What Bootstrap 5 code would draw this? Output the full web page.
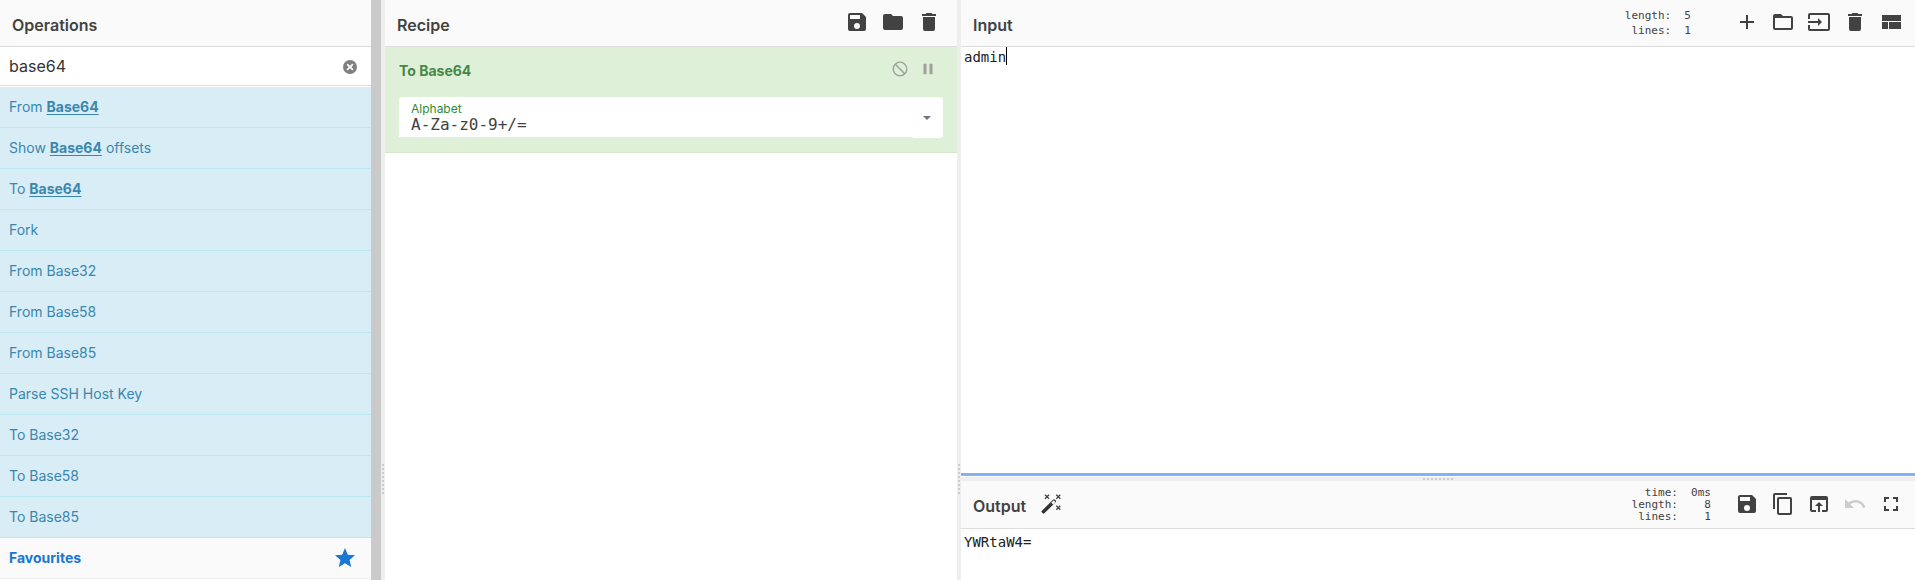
<!DOCTYPE html>
<html lang="en">
<head>
<meta charset="utf-8">
<meta name="viewport" content="width=device-width, initial-scale=1">
<title>CyberChef</title>
<link href="https://cdn.jsdelivr.net/npm/bootstrap@5.3.0/dist/css/bootstrap.min.css" rel="stylesheet">
<style>
body { font-family: Inter, "Noto Sans", sans-serif; font-size: 14px; line-height: 20px; color: #424242; }
.workspace { display: grid; height: 100vh; grid-template-columns: 381fr 4px 572fr 4px 954fr; }
.io-panes { display: grid; grid-template-rows: 477fr 4px 99fr; }
.pane-title { min-height: 47px; padding: 0 12px; background: #fafafa; border-bottom: 1px solid #ddd; }
.pane-title h2 { font-size: 16px; line-height: 24px; font-weight: 600; margin: 0; padding-top: 3px; }
.output-title { min-height: 48px; }
.recipe-title { padding-right: 16px; }
.tools { gap: 12px; padding-bottom: 2px; }
.gutter { background: #eee; }
.gutter-col { padding: 0 1px; }
.gutter-col::before { content: ""; flex: 464 1 0; }
.gutter-col::after { content: ""; flex: 86 1 0; }
.grip-v { height: 30px; background: repeating-linear-gradient(#ccc 0 2px, transparent 2px 4px); }
.grip-h { width: 30px; height: 2px; background: repeating-linear-gradient(90deg, #ccc 0 2px, transparent 2px 4px); }
.track { width: 10px; background: #cacaca; }
.icon-btn { border: 0; background: none; padding: 0; color: #424242; display: block; line-height: 0; }
.icon-btn:disabled { color: #ccc; }
svg { fill: currentColor; display: block; }
.search-row { height: 39px; margin-bottom: 1px; padding-right: 12px; border-bottom: 1px solid #ddd; }
.search-row input { border: 0; outline: 0; background: none; padding: 0 9px; font-size: 16px; color: #333; min-width: 0; }
.clear-btn { color: #808080; padding-top: 2px; }
.op-list a { display: block; height: 41px; padding: 10px 9px; color: #3a87ad; background: #d9edf7; border-bottom: 1px solid #bce8f1; text-decoration: none; }
.op-list b { font-weight: 700; text-decoration: underline; text-underline-offset: 2px; }
.category { height: 41px; padding: 0 14px 0 9px; background: #fafafa; border-bottom: 1px solid #eee; color: #1976d2; font-weight: 700; text-decoration: none; }
.recipe-op { background: #dff0d8; border-bottom: 1px solid #d6e9c6; padding: 10px 14px 15px; color: #468847; }
.recipe-op h3 { font-size: 14px; line-height: 20px; font-weight: 700; margin: 0; padding-top: 4px; }
.op-tools { gap: 10px; padding-right: 6px; }
.op-tools .icon-btn { color: #9da19a; }
.arg { margin-top: 16px; background: #fff; border-radius: 4px 4px 0 0; height: 40px; }
.arg-field { padding: 5px 12px 0; }
.arg label { font-size: 12px; line-height: 14px; color: #2e8b37; }
.arg input { border: 0; outline: 0; padding: 0; background: none; line-height: 16px; height: 16px; font-size: 16px; color: #424242; }
.arg .dropdown-toggle { width: 32px; height: 41px; border-radius: 4px; background: #fff; color: #6b7785; }
.arg .dropdown-toggle::after { margin: 0; border-width: 4px 4px 0; }
.mono, .arg input { font-family: "DejaVu Sans Mono", "Liberation Mono", monospace; }
.stats { font-size: 11px; line-height: 15px; text-align: right; margin: 0 44px 0 0; overflow: visible; color: #424242; }
.stats-tight { line-height: 12px; margin-right: 24px; }
.wand-btn { margin-left: 15px; }
.editor { display: block; border: 0; outline: 0; resize: none; padding: 0 3px; font-size: 14px; line-height: 20px; color: #212121; width: 100%; background: #fff; }
.output-editor { padding-top: 3px; }
.input-pane { border-bottom: 3px solid #80b1f9; margin-bottom: 1px; }
.caret { position: absolute; top: 0; left: calc(3px + 5ch); width: 1px; height: 18px; background: #000; }
.editor-wrap { font-size: 14px; }
</style>
</head>
<body class="overflow-hidden">
<svg class="d-none" aria-hidden="true">
<symbol id="save" viewBox="0 0 24 24"><path d="M17 3H5a2 2 0 0 0-2 2v14a2 2 0 0 0 2 2h14a2 2 0 0 0 2-2V7l-4-4zm-5 16a3 3 0 1 1 0-6 3 3 0 0 1 0 6zm3-10H5V5h10v4z"/></symbol>
<symbol id="folder" viewBox="0 0 24 24"><path d="M10 4H4a2 2 0 0 0-2 2v12a2 2 0 0 0 2 2h16a2 2 0 0 0 2-2V8a2 2 0 0 0-2-2h-8l-2-2z"/></symbol>
<symbol id="folder-open" viewBox="0 0 24 24"><path d="M20 6h-8l-2-2H4a2 2 0 0 0-2 2v12a2 2 0 0 0 2 2h16a2 2 0 0 0 2-2V8a2 2 0 0 0-2-2zm0 12H4V8h16v10z"/></symbol>
<symbol id="trash" viewBox="0 0 24 24"><path d="M6 19a2 2 0 0 0 2 2h8a2 2 0 0 0 2-2V7H6v12zM19 4h-3.5l-1-1h-5l-1 1H5v2h14V4z"/></symbol>
<symbol id="add" viewBox="0 0 24 24"><path d="M19 13h-6v6h-2v-6H5v-2h6V5h2v6h6v2z"/></symbol>
<symbol id="import" viewBox="0 0 24 24"><path d="M21 3H3a2 2 0 0 0-2 2v4h2V5h18v14H3v-4H1v4a2 2 0 0 0 2 2h18a2 2 0 0 0 2-2V5a2 2 0 0 0-2-2zM11 16l4-4-4-4v3H1v2h10v3z"/></symbol>
<symbol id="layout" viewBox="0 0 24 24"><path d="M3 5h19v6H3zM3 12h6v7H3zM10 12h12v7H10z"/></symbol>
<symbol id="copy" viewBox="0 0 24 24"><path d="M16 1H4a2 2 0 0 0-2 2v14h2V3h12V1zm3 4H8a2 2 0 0 0-2 2v14a2 2 0 0 0 2 2h11a2 2 0 0 0 2-2V7a2 2 0 0 0-2-2zm0 16H8V7h11v14z"/></symbol>
<symbol id="open" viewBox="0 0 24 24"><path d="M19 4H5a2 2 0 0 0-2 2v12a2 2 0 0 0 2 2h4v-2H5V8h14v10h-4v2h4a2 2 0 0 0 2-2V6a2 2 0 0 0-2-2zm-7 6l-4 4h3v6h2v-6h3l-4-4z"/></symbol>
<symbol id="undo" viewBox="0 0 24 24"><path d="M12.5 8c-2.65 0-5.05.99-6.9 2.6L2 7v9h9l-3.62-3.62c1.39-1.16 3.16-1.88 5.12-1.88 3.54 0 6.55 2.31 7.6 5.5l2.37-.78C21.08 11.03 17.15 8 12.5 8z"/></symbol>
<symbol id="full" viewBox="0 0 24 24"><path d="M7 14H5v5h5v-2H7v-3zm-2-4h2V7h3V5H5v5zm12 7h-3v2h5v-5h-2v3zM14 5v2h3v3h2V5h-5z"/></symbol>
<symbol id="ban" viewBox="0 0 24 24"><path d="M12 2a10 10 0 1 0 0 20 10 10 0 0 0 0-20zM4 12a8 8 0 0 1 1.69-4.9L16.9 18.31A8 8 0 0 1 4 12zm14.31 4.9L7.1 5.69A8 8 0 0 1 18.31 16.9z"/></symbol>
<symbol id="pause" viewBox="0 0 24 24"><path d="M6 19h4V5H6v14zm8-14v14h4V5h-4z"/></symbol>
<symbol id="star" viewBox="0 0 24 24"><path d="M12 17.27L18.18 21l-1.64-7.03L22 9.24l-7.19-.61L12 2 9.19 8.63 2 9.24l5.46 4.73L5.82 21z"/></symbol>
<symbol id="clear" viewBox="0 0 14 14"><circle cx="7" cy="7" r="7"/><path d="M4.6 4.6l4.8 4.8M9.4 4.6L4.6 9.400" stroke="#fff" stroke-width="1.700" stroke-linecap="round"/></symbol>
<symbol id="wand" viewBox="0 0 20 20"><path d="M0.500 17.200L12 5.700q1-.9 2 0l.6.600q.9 1 0 2L3.100 19.600Q2.600 20 2.100 19.600L.5 18.100Q.1 17.600.5 17.200zM10.300 8.700l1.700 1.700 1.900-1.900q.5-.6 0-1.100l-.6-.600q-.5-.5-1.100 0z" fill="#333" fill-rule="evenodd"/><path d="M4 .700l4 4M8 .7l-4 4M15.300.7l4 4M19.300.7l-4 4M15.300 11.700l4 4M19.300 11.700l-4 4" stroke="#424242" stroke-width="1.300"/></symbol>
</svg>
<main class="workspace">
  <section class="d-flex overflow-hidden">
    <div class="flex-grow-1">
      <header class="pane-title d-flex align-items-center"><h2>Operations</h2></header>
      <div class="search-row d-flex align-items-center">
        <input class="flex-grow-1" type="text" value="base64" aria-label="Search operations">
        <button class="icon-btn clear-btn" aria-label="Clear search"><svg width="18" height="14"><use href="#clear"/></svg></button>
      </div>
      <nav class="op-list">
        <a href="#">From <b>Base64</b></a>
        <a href="#">Show <b>Base64</b> offsets</a>
        <a href="#">To <b>Base64</b></a>
        <a href="#">Fork</a>
        <a href="#">From Base32</a>
        <a href="#">From Base58</a>
        <a href="#">From Base85</a>
        <a href="#">Parse SSH Host Key</a>
        <a href="#">To Base32</a>
        <a href="#">To Base58</a>
        <a href="#">To Base85</a>
      </nav>
      <a href="#" class="category d-flex align-items-center justify-content-between">Favourites <svg width="24" height="24"><use href="#star"/></svg></a>
    </div>
    <div class="track" aria-hidden="true"></div>
  </section>
  <div class="gutter gutter-col d-flex flex-column"><div class="grip-v"></div></div>
  <section class="overflow-hidden">
    <header class="pane-title recipe-title d-flex align-items-center justify-content-between">
      <h2>Recipe</h2>
      <div class="d-flex tools">
        <button class="icon-btn" aria-label="Save recipe"><svg width="24" height="24"><use href="#save"/></svg></button>
        <button class="icon-btn" aria-label="Load recipe"><svg width="24" height="24"><use href="#folder"/></svg></button>
        <button class="icon-btn" aria-label="Clear recipe"><svg width="24" height="24"><use href="#trash"/></svg></button>
      </div>
    </header>
    <div class="recipe-op">
      <div class="d-flex justify-content-between align-items-center">
        <h3>To Base64</h3>
        <div class="d-flex op-tools">
          <button class="icon-btn" aria-label="Disable operation"><svg width="18" height="18"><use href="#ban"/></svg></button>
          <button class="icon-btn" aria-label="Set breakpoint"><svg width="18" height="18"><use href="#pause"/></svg></button>
        </div>
      </div>
      <div class="arg d-flex align-items-start">
        <div class="arg-field d-flex flex-column flex-grow-1">
          <label for="alphabet">Alphabet</label>
          <input id="alphabet" type="text" value="A-Za-z0-9+/=">
        </div>
        <button class="icon-btn dropdown-toggle" aria-label="Choose alphabet"></button>
      </div>
    </div>
  </section>
  <div class="gutter gutter-col d-flex flex-column"><div class="grip-v"></div></div>
  <section class="io-panes overflow-hidden">
    <div class="input-pane d-flex flex-column">
      <header class="pane-title d-flex align-items-center">
        <h2 class="me-auto">Input</h2>
        <pre class="stats mono">length:  5
 lines:  1</pre>
        <div class="d-flex tools">
          <button class="icon-btn" aria-label="Add a new input tab"><svg width="24" height="24"><use href="#add"/></svg></button>
          <button class="icon-btn" aria-label="Open folder as input"><svg width="24" height="24"><use href="#folder-open"/></svg></button>
          <button class="icon-btn" aria-label="Open file as input"><svg width="24" height="24"><use href="#import"/></svg></button>
          <button class="icon-btn" aria-label="Clear input and output"><svg width="24" height="24"><use href="#trash"/></svg></button>
          <button class="icon-btn" aria-label="Reset pane layout"><svg width="24" height="24"><use href="#layout"/></svg></button>
        </div>
      </header>
      <div class="editor-wrap mono flex-grow-1 position-relative">
        <textarea class="editor mono h-100" aria-label="Input" spellcheck="false">admin</textarea>
        <span class="caret"></span>
      </div>
    </div>
    <div class="gutter d-flex align-items-center justify-content-center"><div class="grip-h"></div></div>
    <div class="d-flex flex-column">
      <header class="pane-title output-title d-flex align-items-center">
        <h2>Output</h2>
        <div class="tools me-auto"><button class="icon-btn wand-btn" aria-label="Magic"><svg width="20" height="20"><use href="#wand"/></svg></button></div>
        <pre class="stats stats-tight mono">time:  0ms
length:    8
lines:    1</pre>
        <div class="d-flex tools">
          <button class="icon-btn" aria-label="Save output to file"><svg width="24" height="24"><use href="#save"/></svg></button>
          <button class="icon-btn" aria-label="Copy output"><svg width="24" height="24"><use href="#copy"/></svg></button>
          <button class="icon-btn" aria-label="Replace input with output"><svg width="24" height="24"><use href="#open"/></svg></button>
          <button class="icon-btn" aria-label="Undo" disabled><svg width="24" height="24"><use href="#undo"/></svg></button>
          <button class="icon-btn" aria-label="Maximise output pane"><svg width="24" height="24"><use href="#full"/></svg></button>
        </div>
      </header>
      <textarea class="editor output-editor mono flex-grow-1" aria-label="Output" readonly>YWRtaW4=</textarea>
    </div>
  </section>
</main>
<script src="https://cdn.jsdelivr.net/npm/bootstrap@5.3.0/dist/js/bootstrap.bundle.min.js"></script>
</body>
</html>
